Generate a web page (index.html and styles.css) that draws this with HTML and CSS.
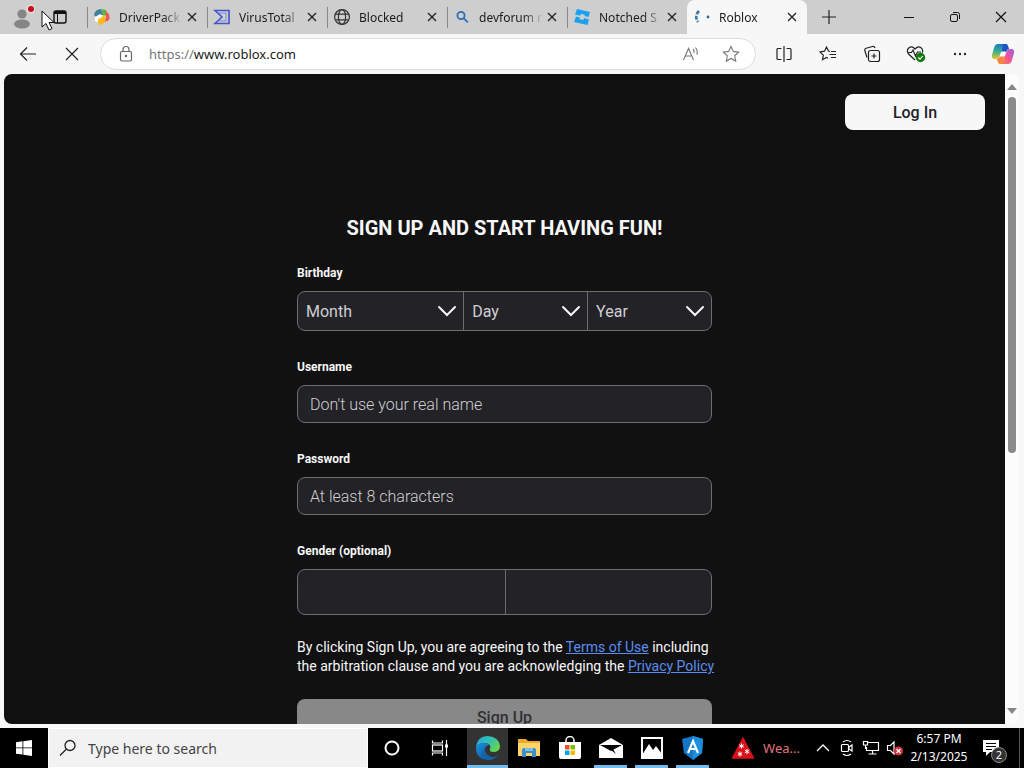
FILE: index.html
```html
<!DOCTYPE html>
<html lang="en">
<head>
    <meta charset="utf-8">
    <title>Roblox</title>
    <link rel="stylesheet" href="styles.css">
</head>
<body>

<div class="tabstrip">
    <div class="profile">
        <button class="icon-btn" aria-label="Profile">
            <svg width="24" height="24" viewBox="0 0 24 24"><circle cx="11" cy="9" r="4.600" fill="#858585"/><ellipse cx="11" cy="19" rx="8" ry="4.500" fill="#858585"/><circle cx="20" cy="4" r="4.500" fill="#e4dcdc"/><circle cx="20" cy="4" r="3" fill="#c50f1f"/></svg>
        </button>
        <button class="icon-btn" aria-label="Tab actions">
            <svg width="16" height="16" viewBox="0 0 16 16" fill="none" stroke="#111"><rect x="2" y="2" width="12" height="12" rx="2" stroke-width="1.4"/><path d="M2 3.5h12" stroke-width="3"/><path d="M5.5 5v9"/></svg>
        </button>
    </div>
    <div class="tab">
        <svg width="18" height="18" viewBox="0 0 18 18"><path d="M1 7a8 7 0 0 1 7-6l2 6-6 3z" fill="#3c7f9c"/><path d="M8 1l5 1 1 6-4-1z" fill="#66ad46"/><path d="M13 3q5 4 3 9l-4 2 1-6z" fill="#ee5948"/><path d="M2 9l5-3 5 3-1 5-5 1-4-2z" fill="#fff"/><path d="M5 11q4-1 6-4 3 5-1 9-3 2-5-1z" fill="#fdb913"/></svg>
        <a href="#">DriverPack</a>
        <button class="close" aria-label="Close tab"><svg width="10" height="10" viewBox="0 0 10 10"><path d="M1 1l8 8M9 1L1 9"/></svg></button>
    </div>
    <div class="tab">
        <svg width="18" height="18" viewBox="0 0 18 18" fill="none"><path d="M2 2.5h14v13H2l7-6.5z" stroke="#4056c8" stroke-width="1.600"/><path d="M6 5h7v8H6l4-4z" stroke="#7b8ce0"/></svg>
        <a href="#">VirusTotal</a>
        <button class="close" aria-label="Close tab"><svg width="10" height="10" viewBox="0 0 10 10"><path d="M1 1l8 8M9 1L1 9"/></svg></button>
    </div>
    <div class="tab">
        <svg width="18" height="18" viewBox="0 0 18 18" fill="none" stroke="#333" stroke-width="1.2"><circle cx="9" cy="9" r="7.4"/><ellipse cx="9" cy="9" rx="3.6" ry="7.4"/><path d="M2.5 6.2h13M2.5 11.8h13"/></svg>
        <a href="#">Blocked</a>
        <button class="close" aria-label="Close tab"><svg width="10" height="10" viewBox="0 0 10 10"><path d="M1 1l8 8M9 1L1 9"/></svg></button>
    </div>
    <div class="tab">
        <svg width="18" height="18" viewBox="0 0 18 18" fill="none" stroke="#2a6fb5" stroke-width="1.8"><circle cx="8" cy="7.5" r="3.6"/><path d="M10.800 10.300l4 4"/></svg>
        <a href="#">devforum r</a>
        <button class="close" aria-label="Close tab"><svg width="10" height="10" viewBox="0 0 10 10"><path d="M1 1l8 8M9 1L1 9"/></svg></button>
    </div>
    <div class="tab">
        <svg width="18" height="18" viewBox="0 0 18 18" fill="#1ba1f2"><path d="M4 1l13 3-1.500 5-4-1 .3-1.300-4-1-.5 2L2 6.500z"/><path d="M3 8.500l4 1-.5 1.700 4 .9.5-2 5 1.500L14.500 17 1 14z"/></svg>
        <a href="#">Notched S</a>
        <button class="close" aria-label="Close tab"><svg width="10" height="10" viewBox="0 0 10 10"><path d="M1 1l8 8M9 1L1 9"/></svg></button>
    </div>
    <div class="tab active">
        <svg width="18" height="18" viewBox="0 0 18 18"><path d="M6 3q-5 5-1 11" fill="none" stroke="#3779a8" stroke-width="2.600" stroke-dasharray="4 1.500"/><circle cx="15" cy="9" r="1.400" fill="#2a6a98"/></svg>
        <a href="#">Roblox</a>
        <button class="close" aria-label="Close tab"><svg width="10" height="10" viewBox="0 0 10 10"><path d="M1 1l8 8M9 1L1 9"/></svg></button>
    </div>
    <button class="icon-btn new-tab" aria-label="New tab">
        <svg width="14" height="14" viewBox="0 0 14 14" stroke="#222" stroke-width="1.2"><path d="M7 0v14M0 7h14"/></svg>
    </button>
    <div class="window-buttons">
        <button class="icon-btn" aria-label="Minimize"><svg width="12" height="12" viewBox="0 0 12 12"><path d="M1 6.500h10" stroke="#111"/></svg></button>
        <button class="icon-btn" aria-label="Restore"><svg width="12" height="12" viewBox="0 0 12 12" fill="none" stroke="#111"><rect x="1.500" y="3.500" width="7" height="7" rx="1.500"/><path d="M4 1.500h4.500a2 2 0 0 1 2 2V8"/></svg></button>
        <button class="icon-btn" aria-label="Close"><svg width="12" height="12" viewBox="0 0 12 12"><path d="M1 1l10 10M11 1L1 11" stroke="#111" stroke-width="1.200"/></svg></button>
    </div>
</div>

<div class="toolbar">
    <button class="icon-btn" aria-label="Back"><svg width="18" height="16" viewBox="0 0 18 16" fill="none" stroke="#222" stroke-width="1.200"><path d="M17 8H1.500M8 1.500L1.500 8 8 14.500"/></svg></button>
    <button class="icon-btn" aria-label="Stop"><svg width="14" height="14" viewBox="0 0 14 14" stroke="#222" stroke-width="1.200"><path d="M1 1l12 12M13 1L1 13"/></svg></button>
    <div class="address">
        <svg width="14" height="18" viewBox="0 0 14 18" fill="none" stroke="#666" stroke-width="1.200"><rect x="1.500" y="6.500" width="11" height="9.500" rx="1.500"/><path d="M4 6V4.500a3 3 0 0 1 6 0V6"/><circle cx="7" cy="11" r=".6" fill="#666"/></svg>
        <a class="url" href="#"><span>https://</span>www.roblox.com</a>
        <button class="icon-btn" aria-label="Read aloud"><svg width="18" height="16" viewBox="0 0 18 16" fill="none" stroke="#777" stroke-width="1.100"><path d="M1.500 14L6.500 2.500 11.500 14M3.200 10h6.600M11 3q1.500 1.500 1 4M13.500 1.500q2.500 3 1.500 7"/></svg></button>
        <button class="icon-btn" aria-label="Add to favorites"><svg width="18" height="18" viewBox="0 0 18 18" fill="none" stroke="#777" stroke-width="1.100"><path d="M9 1.500l2.300 4.900 5.300.7-3.900 3.700 1 5.300L9 13.500l-4.700 2.600 1-5.300-3.900-3.700 5.300-.7z"/></svg></button>
    </div>
    <div class="tools">
        <button class="icon-btn" aria-label="Split screen"><svg width="18" height="18" viewBox="0 0 18 18" fill="none" stroke="#222" stroke-width="1.200"><path d="M6.500 3.500H3a1 1 0 0 0-1 1v9a1 1 0 0 0 1 1h3.500M11.500 3.500H15a1 1 0 0 1 1 1v9a1 1 0 0 1-1 1h-3.500M9 1v16"/></svg></button>
        <button class="icon-btn" aria-label="Favorites"><svg width="18" height="18" viewBox="0 0 18 18" fill="none" stroke="#222" stroke-width="1.200"><path d="M11 6.500L9.500 6 7.500 2 5.500 6.200l-4.500.7 3.300 3.200-.8 4.600 4-2.200 1.500.8M12 6.500h5M10.500 9.500H17M12 12.500h5"/></svg></button>
        <button class="icon-btn" aria-label="Collections"><svg width="18" height="18" viewBox="0 0 18 18" fill="none" stroke="#222" stroke-width="1.200"><rect x="5.500" y="5.500" width="11" height="11" rx="2"/><path d="M11 8.500v5M8.500 11h5M4 12.500L1.800 5.500a2 2 0 0 1 1.300-2.300L9.500 1.500a2 2 0 0 1 2.500 1.500"/></svg></button>
        <button class="icon-btn" aria-label="Browser essentials"><svg width="20" height="18" viewBox="0 0 20 18" fill="none" stroke="#222" stroke-width="1.200"><path d="M9 15L2.500 9Q0 5 3 2.700q3-2 6 1.300 3-3.300 6-1.300 2.500 2 1.300 5M2 7.500h3.500L7 5l2.500 6 2-4H15"/><circle cx="14.500" cy="12.500" r="4.700" fill="#107c10" stroke="none"/><path d="M12.300 12.500l1.600 1.600 2.800-3" stroke="#fff"/></svg></button>
        <button class="icon-btn" aria-label="Settings and more"><svg width="16" height="16" viewBox="0 0 16 16" fill="#222"><circle cx="3" cy="8" r="1.200"/><circle cx="8" cy="8" r="1.200"/><circle cx="13" cy="8" r="1.200"/></svg></button>
        <button class="icon-btn" aria-label="Copilot">
            <svg width="24" height="22" viewBox="0 0 24 22">
                <defs>
                    <linearGradient id="copilotBlue" x1="0" y1="0" x2="0" y2="1"><stop offset="0" stop-color="#1c78c8"/><stop offset=".5" stop-color="#35b08a"/><stop offset="1" stop-color="#f0c030"/></linearGradient>
                    <linearGradient id="copilotPink" x1="1" y1="0" x2="0" y2="1"><stop offset="0" stop-color="#a45ce8"/><stop offset=".5" stop-color="#ef5596"/><stop offset="1" stop-color="#fb8a3c"/></linearGradient>
                </defs>
                <path d="M7 1h9q-4 1-5 5l-2 6q-1 4-4 4H4q-4 0-3-4l2-7q1-4 4-4z" fill="url(#copilotBlue)"/>
                <path d="M17 21H8q4-1 5-5l2-6q1-4 4-4h1q4 0 3 4l-2 7q-1 4-4 4z" fill="url(#copilotPink)"/>
                <path d="M11 1h4q2 0 3 5-2 0-3 3h-5l1-3q1-4 0-5z" fill="#1a55c4"/>
                <path d="M13 21H9q-2 0-3-5 2 0 3-3h5l-1 3q-1 4 0 5z" fill="#f8843f"/>
                <path d="M10.500 8.500h4l-1.500 5H9z" fill="#fff"/>
            </svg>
        </button>
    </div>
</div>

<div class="viewport">
    <main class="page">
        <header class="page-header">
            <button class="login">Log In</button>
        </header>
        <form class="signup">
            <h1>SIGN UP AND START HAVING FUN!</h1>
            <div class="field">
                <label for="month">Birthday</label>
                <div class="birthday">
                    <div class="select">
                        <select id="month"><option>Month</option></select>
                        <svg width="20" height="12" viewBox="0 0 20 12"><path d="M2 2l8 8 8-8"/></svg>
                    </div>
                    <div class="select">
                        <select id="day" aria-label="Day"><option>Day</option></select>
                        <svg width="20" height="12" viewBox="0 0 20 12"><path d="M2 2l8 8 8-8"/></svg>
                    </div>
                    <div class="select">
                        <select id="year" aria-label="Year"><option>Year</option></select>
                        <svg width="20" height="12" viewBox="0 0 20 12"><path d="M2 2l8 8 8-8"/></svg>
                    </div>
                </div>
            </div>
            <div class="field">
                <label for="username">Username</label>
                <input id="username" type="text" placeholder="Don't use your real name">
            </div>
            <div class="field">
                <label for="password">Password</label>
                <input id="password" type="password" placeholder="At least 8 characters">
            </div>
            <div class="field">
                <label id="genderLabel">Gender (optional)</label>
                <div class="gender" role="group" aria-labelledby="genderLabel">
                    <button type="button" aria-label="Female"></button>
                    <button type="button" aria-label="Male"></button>
                </div>
            </div>
            <p class="terms">By clicking Sign Up, you are agreeing to the <a href="#">Terms of Use</a> including the arbitration clause and you are acknowledging the <a href="#">Privacy Policy</a></p>
            <button class="submit" type="button">Sign Up</button>
        </form>
    </main>
    <div class="scrollbar">
        <svg width="10" height="6" viewBox="0 0 10 6"><path d="M0 6l5-6 5 6z"/></svg>
        <div class="track"><div class="thumb"></div></div>
        <svg width="10" height="6" viewBox="0 0 10 6"><path d="M0 0l5 6 5-6z"/></svg>
    </div>
</div>

<div class="taskbar">
    <button class="start" aria-label="Start"><svg width="16" height="16" viewBox="0 0 16 16" fill="#fff"><path d="M0 2.200l6.500-.9v6.200H0zM7.300 1.200L16 0v7.500H7.300zM0 8.300h6.500v6.300L0 13.700zM7.300 8.300H16V16l-8.700-1.200z"/></svg></button>
    <label class="search">
        <svg width="18" height="18" viewBox="0 0 18 18" fill="none" stroke="#222" stroke-width="1.300"><circle cx="11" cy="6.500" r="5"/><path d="M7.500 10L1 16.500"/></svg>
        <input type="text" placeholder="Type here to search" aria-label="Search">
    </label>
    <div class="apps">
        <button class="wide" aria-label="Cortana"><svg width="18" height="18" viewBox="0 0 18 18"><circle cx="9" cy="9" r="6.500" fill="none" stroke="#fff" stroke-width="2"/></svg></button>
        <button class="wide" aria-label="Task view"><svg width="18" height="18" viewBox="0 0 18 18" fill="none" stroke="#fff" stroke-width="1.200"><path d="M1.500 1.500v2.500h10V1.500M1.500 16.500V14h10v2.500M15.500 1v16"/><rect x="1.500" y="6" width="10" height="6"/><path d="M15.500 5.500v3" stroke-width="3"/></svg></button>
        <button class="running current" aria-label="Microsoft Edge">
            <svg width="26" height="26" viewBox="0 0 26 26">
                <defs>
                    <linearGradient id="edgeTop" x1="0" y1="0" x2="1" y2=".5"><stop offset="0" stop-color="#29a8dc"/><stop offset=".6" stop-color="#35c1b0"/><stop offset="1" stop-color="#61d552"/></linearGradient>
                    <linearGradient id="edgeLow" x1="0" y1="0" x2="1" y2="1"><stop offset="0" stop-color="#1a8fe0"/><stop offset="1" stop-color="#114a8b"/></linearGradient>
                </defs>
                <path d="M1 13Q2 1 13 1q11 1 12 10 0 6-7 6-4 0-3-3 2-5-5-6-7 0-9 5z" fill="url(#edgeTop)"/>
                <path d="M1 13q1-5 8-5 4 0 5 2-5 1-4 6 2 6 9 6l4-2q-4 5-10 5Q1 24 1 13z" fill="url(#edgeLow)"/>
                <path d="M10 13q-2 6 3 8 5 3 10-1-4 5-10 5-7-2-6-7 0-3 3-5z" fill="#1463a8"/>
            </svg>
        </button>
        <button aria-label="File Explorer"><svg width="22" height="20" viewBox="0 0 22 20"><path d="M0 1h8l2 2h12v15H0z" fill="#e9a92f"/><path d="M0 5h22v13H0z" fill="#ffd36b"/><path d="M4 12q0-2 2-2h10q2 0 2 2v7h-4v-4H8v4H4z" fill="#3b8fc4"/><path d="M7 10h8v3H7z" fill="#78bfe6"/></svg></button>
        <button aria-label="Microsoft Store"><svg width="24" height="24" viewBox="0 0 24 24"><path d="M8 7V4.500a4 4 0 0 1 8 0V7" fill="none" stroke="#fff" stroke-width="1.500"/><path d="M1 6h22v15q0 2-2 2H3q-2 0-2-2z" fill="#fff"/><path d="M7 9h4.500v4.500H7z" fill="#f25022"/><path d="M12.500 9H17v4.500h-4.500z" fill="#7fba00"/><path d="M7 14.500h4.500V19H7z" fill="#00a4ef"/><path d="M12.500 14.500H17V19h-4.500z" fill="#ffb900"/></svg></button>
        <button class="running" aria-label="Mail"><svg width="24" height="20" viewBox="0 0 24 20"><path d="M0 7l12-7 12 7v13H0z" fill="#fff"/><path d="M1 7h22L12 13z" fill="#000"/><path d="M12 12l5 4-3-5z" fill="#000"/></svg></button>
        <button class="running" aria-label="Photos"><svg width="22" height="22" viewBox="0 0 22 22"><rect x="1" y="1" width="20" height="20" fill="#000" stroke="#fff" stroke-width="2"/><path d="M1 18L8 7l4 6 3-4 6 8v4H1z" fill="#fff"/></svg></button>
        <button class="running" aria-label="Launcher"><svg width="24" height="26" viewBox="0 0 24 26"><path d="M12 1l10 3-1 14-9 7-9-7L1 4z" fill="#1277c8"/><path d="M12 1l10 3-1 14-9 7z" fill="#1c8fe0"/><path d="M7 18l5-12 5 12M9 14h6" fill="none" stroke="#fff" stroke-width="2.200"/></svg></button>
    </div>
    <div class="tray">
        <button class="weather">
            <svg width="24" height="24" viewBox="0 0 24 24"><path d="M12 2l10.500 20h-21z" fill="#d8101c" stroke="#d8101c" stroke-width="1.500" stroke-linejoin="round"/><path d="M10.500 7.500v5M8.300 8.700l4.400 2.600M12.700 8.700l-4.400 2.600M16 13v5M13.800 14.200l4.400 2.600M18.200 14.200l-4.400 2.600M9 15.500v5M6.800 16.700l4.400 2.600M11.200 16.700l-4.400 2.600" stroke="#fff"/></svg>
            Wea...
        </button>
        <button aria-label="Show hidden icons"><svg width="14" height="8" viewBox="0 0 14 8" fill="none" stroke="#fff" stroke-width="1.300"><path d="M1 7l6-6 6 6"/></svg></button>
        <button aria-label="Meet now"><svg width="14" height="18" viewBox="0 0 14 18" fill="none" stroke="#fff" stroke-width="1.200"><rect x="1.500" y="5.500" width="7" height="7" rx="1"/><path d="M8.500 8.500L12 6v6l-3.500-2.500M3 3q4-3 8 0M3 15q4 3 8 0"/></svg></button>
        <button aria-label="Network"><svg width="18" height="16" viewBox="0 0 18 16" fill="none" stroke="#fff" stroke-width="1.200"><path d="M6 2.500h10.500v8H4.500V7M10.500 10.500v3M6.500 14h8"/><path d="M1.500 1.500h4v3.500h-4zM3.500 5v4"/></svg></button>
        <button aria-label="Volume"><svg width="18" height="16" viewBox="0 0 18 16"><path d="M1.500 5.500h3L8 2v12l-3.500-3.500h-3z" fill="none" stroke="#fff" stroke-width="1.200"/><circle cx="12.500" cy="11" r="4.500" fill="#d3303c"/><path d="M10.500 9l4 4M14.500 9l-4 4" stroke="#fff" stroke-width="1.300"/></svg></button>
        <button class="clock"><time>6:57 PM</time><time>2/13/2025</time></button>
        <button class="notifications" aria-label="Notifications">
            <svg width="18" height="18" viewBox="0 0 18 18"><path d="M1 1h16v12h-9l-4 4v-4H1z" fill="#fff"/><path d="M4 4.500h10M4 7.500h10M4 10.500h6" stroke="#000"/></svg>
            <span class="badge">2</span>
        </button>
    </div>
</div>

<svg class="cursor" width="14" height="22" viewBox="0 0 14 22"><path d="M1 1v16l4-3.500L8 20l3-1.500L8 12.500h5z" fill="#fff" stroke="#111"/></svg>

</body>
</html>
```
FILE: styles.css
```css
* {
    box-sizing: border-box;
}

body {
    margin: 0;
    height: 100vh;
    display: flex;
    flex-direction: column;
    overflow: hidden;
    background-color: #f7f7f7;
    font-family: "Noto Sans", sans-serif;
    font-size: 12px;
    color: #1b1b1b;
}

button {
    border: none;
    padding: 0;
    background: none;
    color: inherit;
    font: inherit;
    cursor: pointer;
}

svg {
    display: block;
    flex: none;
}

.icon-btn {
    display: flex;
    align-items: center;
    justify-content: center;
}

/* tabs */
.tabstrip {
    display: flex;
    height: 34px;
    background-color: #cecece;
}

.profile {
    display: flex;
    width: 87px;
    padding-left: 11px;
    gap: 17px;
}

.tab {
    display: flex;
    align-items: center;
    flex: 0 1 120px;
    min-width: 0;
    padding: 0 9px 0 5px;
    border-left: 1px solid #888;
    border-image: linear-gradient(transparent 8px, #888 8px, #888 27px, transparent 27px) 1;
}

.tab a {
    flex: 1;
    min-width: 0;
    margin-left: 8px;
    overflow: hidden;
    white-space: nowrap;
    color: #1b1b1b;
    text-decoration: none;
    -webkit-mask-image: linear-gradient(to right, #000 44px, transparent 64px);
    mask-image: linear-gradient(to right, #000 44px, transparent 64px);
}

.tab.active {
    border: none;
    padding-left: 6px;
    border-radius: 8px 8px 0 0;
    background-color: #f7f7f7;
}

.close {
    padding: 3px 1px;
}

.close path {
    stroke: #222;
    stroke-width: 1.3;
}

.new-tab {
    width: 44px;
}

.window-buttons {
    display: flex;
    margin-left: auto;
}

.window-buttons .icon-btn {
    width: 46px;
}

/* toolbar */
.toolbar {
    display: flex;
    align-items: center;
    height: 40px;
    padding-left: 6px;
}

.toolbar > .icon-btn {
    width: 44px;
    height: 32px;
}

.address {
    display: flex;
    align-items: center;
    flex: 1;
    height: 32px;
    margin-left: 6px;
    padding: 0 4px 0 18px;
    border: 1px solid #ddd;
    border-radius: 16px;
    background-color: #fff;
}

.address .icon-btn {
    width: 40px;
}

.url {
    flex: 1;
    margin-left: 16px;
    font-size: 13px;
    color: #1b1b1b;
    text-decoration: none;
}

.url span {
    color: #767676;
}

.tools {
    display: flex;
    padding-left: 6px;
}

.tools .icon-btn {
    width: 44px;
    height: 32px;
}

.tools .icon-btn:last-child {
    width: 42px;
}

/* web page */
.viewport {
    display: flex;
    flex: 1;
    min-height: 0;
    margin: 0 5px 4px 4px;
    border-radius: 8px;
    overflow: hidden;
}

.page {
    flex: 1;
    overflow: hidden;
    background-color: #101010;
    color: #f7f7f8;
    font-family: Roboto, sans-serif;
    font-size: 16px;
}

.page-header {
    display: flex;
    justify-content: flex-end;
    padding: 20px;
}

.login {
    width: 140px;
    height: 36px;
    border-radius: 8px;
    background-color: #f7f7f8;
    color: #202227;
    font-weight: 500;
}

.signup {
    max-width: 465px;
    margin: 42px auto 0;
    padding: 22px 25px;
    background-color: #111112;
}

.signup h1 {
    margin: 0 0 20px;
    font-size: 20px;
    line-height: 28px;
    text-align: center;
}

.field {
    display: flex;
    flex-direction: column;
    gap: 7px;
    margin-bottom: 25px;
}

.field label {
    font-size: 12px;
    line-height: 22px;
    font-weight: 700;
}

.field input {
    width: 100%;
    height: 38px;
    padding: 0 12px;
    border: 1px solid #6d6d70;
    border-radius: 8px;
    background-color: #232227;
    color: #d5d5d8;
    font: 300 16px Roboto, sans-serif;
}

.field input::placeholder {
    color: #d0d0d3;
}

.birthday,
.gender {
    display: grid;
    border: 1px solid #6d6d70;
    border-radius: 8px;
    background-color: #232227;
}

.birthday {
    grid-template-columns: 4fr 3fr 3fr;
    height: 40px;
}

.gender {
    grid-template-columns: 1fr 1fr;
    height: 46px;
}

.select {
    display: grid;
    align-items: center;
}

.select + .select,
.gender button + button {
    border-left: 1px solid #6d6d70;
}

.select select,
.select svg {
    grid-area: 1 / 1;
}

.select select {
    width: 100%;
    height: 100%;
    padding: 0 8px;
    border: none;
    appearance: none;
    background: none;
    color: #cfcfd2;
    font: 16px Roboto, sans-serif;
}

.select svg {
    justify-self: end;
    margin-right: 6px;
    pointer-events: none;
}

.select path {
    fill: none;
    stroke: #f7f7f8;
    stroke-width: 2;
    stroke-linecap: round;
}

.terms {
    margin: 0 -10px 23px 0;
    font-size: 14px;
    line-height: 19px;
}

.field + .terms {
    margin-top: -2px;
}

.terms a {
    color: #5b8def;
}

.submit {
    width: 100%;
    height: 36px;
    border-radius: 8px;
    background-color: #888889;
    color: #303033;
    font-weight: 500;
}

.scrollbar {
    display: flex;
    flex-direction: column;
    align-items: center;
    width: 14px;
    padding: 10px 0;
    gap: 7px;
    background-color: #fcfcfc;
}

.scrollbar path {
    fill: #868686;
}

.track {
    flex: 1;
    width: 8px;
}

.thumb {
    height: 59%;
    border-radius: 4px;
    background-color: #8b8b8b;
}

/* taskbar */
.taskbar {
    display: flex;
    height: 40px;
    background-color: #000;
    color: #fff;
}

.taskbar button {
    display: flex;
    align-items: center;
    justify-content: center;
}

.start {
    width: 48px;
}

.search {
    display: flex;
    align-items: center;
    flex: 0 1 320px;
    gap: 9px;
    padding: 0 10px;
    border: 1px solid #fff;
    background-color: #f2f2f2;
}

.search input {
    flex: 1;
    min-width: 0;
    border: none;
    background: none;
    font: 14px "Noto Sans", sans-serif;
}

.search input::placeholder {
    color: #444;
}

.apps {
    display: flex;
}

.apps button {
    width: 41px;
    border-bottom: 3px solid transparent;
    border-top: 3px solid transparent;
}

.apps .wide {
    width: 48px;
}

.apps .running {
    border-bottom-color: #76b9ed;
}

.apps button.running:not(.current) {
    width: 33px;
    margin: 0 4px;
}

.apps .current {
    margin-left: 3px;
    background-color: #333;
    border-top-color: #333;
}

.tray {
    display: flex;
    margin-left: auto;
    margin-right: 4px;
    border-right: 1px solid #555;
}

.tray button {
    width: 24px;
}

.tray .weather {
    width: auto;
    gap: 8px;
    margin-right: 11px;
    font-size: 13px;
    color: #e0757c;
}

.tray .clock {
    flex-direction: column;
    width: 64px;
    line-height: 18px;
}

.tray .notifications {
    position: relative;
    width: 48px;
    padding-right: 8px;
}

.badge {
    position: absolute;
    right: 12px;
    bottom: 5px;
    width: 16px;
    border: 1px solid #888;
    border-radius: 50%;
    background-color: #333;
    font-size: 11px;
    line-height: 14px;
}

.cursor {
    position: absolute;
    left: 41px;
    top: 10px;
}
```
